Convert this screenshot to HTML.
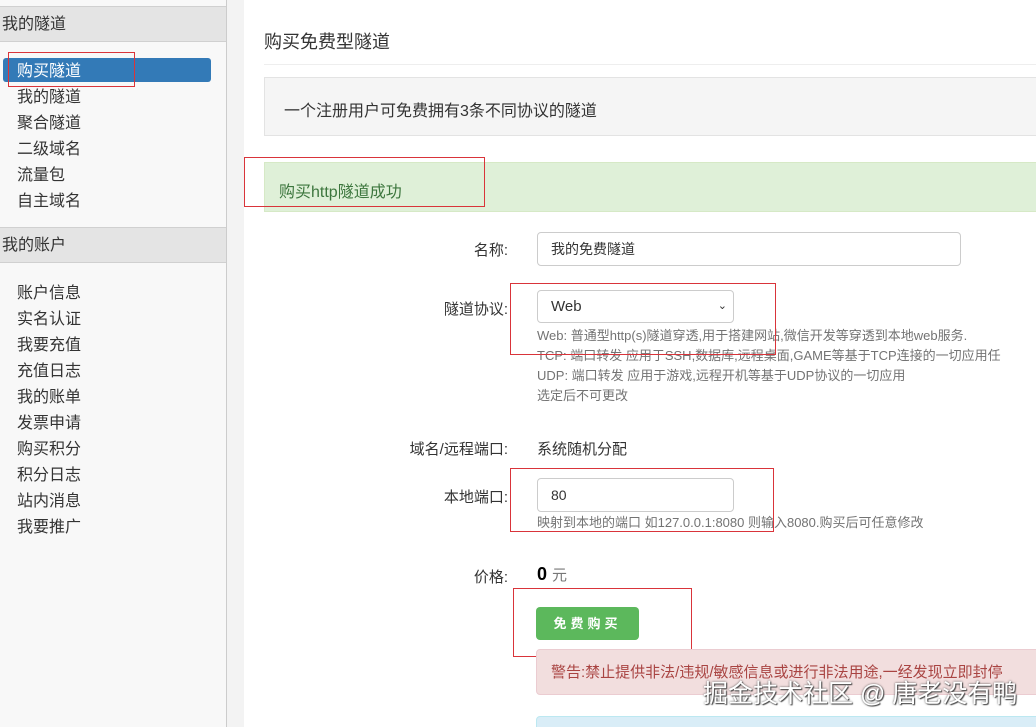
<!DOCTYPE html>
<html><head><meta charset="utf-8"><style>
html,body{margin:0;width:1036px;height:727px;overflow:hidden}
body{background:#fff;font-family:"Liberation Sans","Noto Sans CJK SC",sans-serif;color:#333;font-size:15px;position:relative}
.a{position:absolute}
.side{left:0;top:0;width:226px;height:727px;background:#f8f8f8;border-right:1px solid #ccc}
.hd{left:0;width:226px;height:36px;background:#e4e4e4;border-top:1px solid #d0d0d0;border-bottom:1px solid #d0d0d0;line-height:36px;padding-left:2px;font-size:16px;box-sizing:border-box}
.it{left:17px;font-size:16px;line-height:26px}
.gap{left:227px;top:0;width:17px;height:727px;background:#f3f3f3}
.red{border:1px solid #d9343a}
.lbl{width:160px;text-align:right;left:348px;font-size:15px}
.inp{border:1px solid #ccc;border-radius:4px;background:#fff;box-sizing:border-box;font-size:14px;padding-left:13px}
.help{left:537px;font-size:13px;color:#737373;line-height:20px;white-space:nowrap}
</style></head><body>
<div class="a side"></div>
<div class="a hd" style="top:6px">我的隧道</div>
<div class="a" style="left:3px;top:58px;width:208px;height:24px;background:#337ab7;border-radius:3px"></div>
<div class="a it" style="top:59px;color:#fff">购买隧道</div>
<div class="a it" style="top:85px">我的隧道<br>聚合隧道<br>二级域名<br>流量包<br>自主域名</div>
<div class="a hd" style="top:227px">我的账户</div>
<div class="a it" style="top:281px">账户信息<br>实名认证<br>我要充值<br>充值日志<br>我的账单<br>发票申请<br>购买积分<br>积分日志<br>站内消息<br>我要推广</div>
<div class="a red" style="left:8px;top:52px;width:125px;height:33px"></div>
<div class="a gap"></div>

<div class="a" style="left:264px;top:28px;font-size:18px">购买免费型隧道</div>
<div class="a" style="left:264px;top:64px;width:772px;border-top:1px solid #eee"></div>
<div class="a" style="left:264px;top:77px;width:780px;height:59px;background:#f5f5f5;border:1px solid #e3e3e3;box-sizing:border-box"></div>
<div class="a" style="left:284px;top:97px;font-size:16px">一个注册用户可免费拥有3条不同协议的隧道</div>
<div class="a" style="left:264px;top:162px;width:780px;height:50px;background:#dff0d8;border:1px solid #d6e9c6;box-sizing:border-box"></div>
<div class="a" style="left:279px;top:178px;font-size:16px;color:#3c763d">购买http隧道成功</div>
<div class="a red" style="left:244px;top:157px;width:239px;height:48px"></div>

<div class="a lbl" style="top:239px">名称:</div>
<div class="a inp" style="left:537px;top:232px;width:424px;height:34px;line-height:32px">我的免费隧道</div>
<div class="a lbl" style="top:298px">隧道协议:</div>
<div class="a inp" style="left:537px;top:290px;width:197px;height:33px;line-height:31px;font-size:15px">Web<span style="position:absolute;right:6px;font-size:11px">&#8964;</span></div>
<div class="a help" style="top:326px">Web: 普通型http(s)隧道穿透,用于搭建网站,微信开发等穿透到本地web服务.<br>TCP: 端口转发 应用于SSH,数据库,远程桌面,GAME等基于TCP连接的一切应用任<br>UDP: 端口转发 应用于游戏,远程开机等基于UDP协议的一切应用<br>选定后不可更改</div>
<div class="a red" style="left:510px;top:283px;width:264px;height:70px"></div>
<div class="a lbl" style="top:438px">域名/远程端口:</div>
<div class="a" style="left:537px;top:438px;font-size:15px">系统随机分配</div>
<div class="a lbl" style="top:486px">本地端口:</div>
<div class="a inp" style="left:537px;top:478px;width:197px;height:34px;line-height:32px">80</div>
<div class="a help" style="top:513px">映射到本地的端口 如127.0.0.1:8080 则输入8080.购买后可任意修改</div>
<div class="a red" style="left:510px;top:468px;width:262px;height:62px"></div>
<div class="a lbl" style="top:566px">价格:</div>
<div class="a" style="left:537px;top:564px;font-size:18px;font-weight:bold;color:#000">0 <span style="font-weight:normal;font-size:15px;color:#777">元</span></div>
<div class="a" style="left:536px;top:607px;width:103px;height:33px;background:#5cb85c;border-radius:4px;color:#fff;font-size:13px;line-height:33px;text-align:center;letter-spacing:4px;font-weight:bold">免费购买</div>
<div class="a red" style="left:513px;top:588px;width:177px;height:67px"></div>
<div class="a" style="left:536px;top:649px;width:510px;height:46px;background:#f2dede;border:1px solid #ebccd1;border-radius:4px;box-sizing:border-box"></div>
<div class="a" style="left:551px;top:661px;font-size:15px;color:#a94442;white-space:nowrap">警告:禁止提供非法/违规/敏感信息或进行非法用途,一经发现立即封停</div>
<div class="a" style="left:536px;top:716px;width:510px;height:20px;background:#d9edf7;border:1px solid #bce8f1;border-radius:4px"></div>
<div class="a" style="left:703px;top:674px;font-size:25px;color:#fff;white-space:nowrap;text-shadow:0 0 2px #555,1px 1px 1px #444">掘金技术社区 @ 唐老没有鸭</div>
</body></html>
